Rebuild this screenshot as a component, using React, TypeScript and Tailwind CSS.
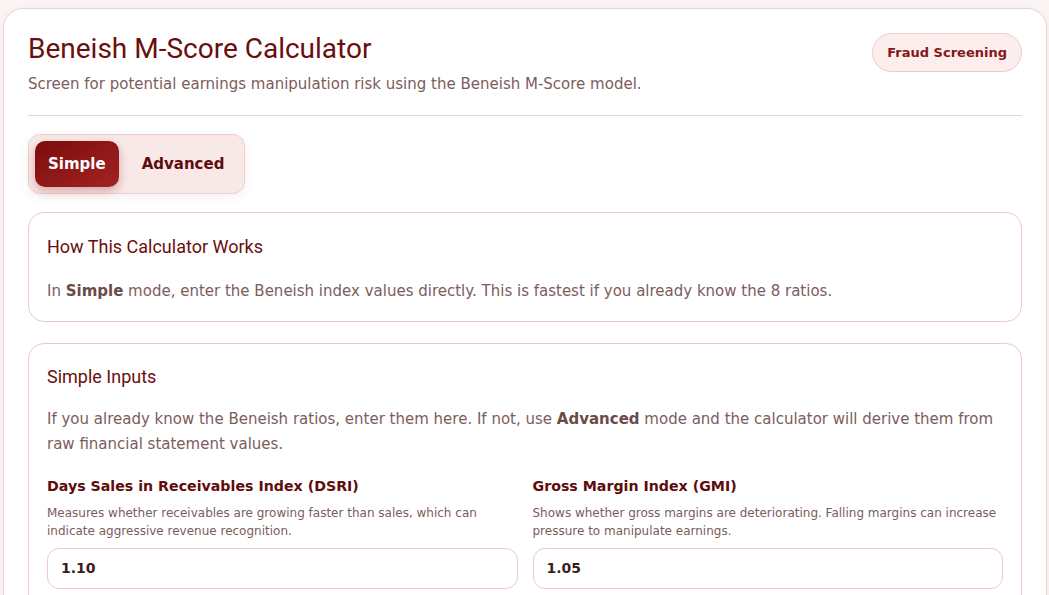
import React from "react";

const body = { fontFamily: '"DejaVu Sans", Verdana, sans-serif' };

function Field({ label, desc, value }: { label: string; desc: string; value: string }) {
  return (
    <div className="flex flex-col">
      <div className="text-[14.2px] font-bold text-[#5e0c0c] leading-[19px]">{label}</div>
      <div className="mt-[8px] text-[12px] leading-[18px] text-[#7a5c5c]">{desc}</div>
      <div className="mt-[8px] h-[41px] rounded-[12px] border border-[#ecc9c9] bg-white flex items-center px-[13px] text-[14px] font-bold text-[#3b1d1d]">
        {value}
      </div>
    </div>
  );
}

export default function App() {
  return (
    <div className="min-h-screen bg-[#fbf4f4] pl-[3px] pr-[2px] pt-[8px]" style={body}>
      <div className="rounded-[20px] border border-[#ecd3d3] bg-white px-[24px] pt-[23px] pb-[24px] shadow-[0_2px_8px_rgba(120,40,40,0.05)]">
        <div className="flex items-start justify-between">
          <div>
            <h1 className="text-[28px] leading-[34px] text-[#6a0e0e] font-normal" style={{ fontFamily: "Roboto, sans-serif" }}>
              Beneish M-Score Calculator
            </h1>
            <p className="mt-[8px] text-[15px] leading-[20px] text-[#7d5c5c]">
              Screen for potential earnings manipulation risk using the Beneish M-Score model.
            </p>
          </div>
          <div className="mt-[1px] h-[39px] rounded-full border border-[#efcaca] bg-[#fdeeee] px-[14px] flex items-center text-[13px] font-bold text-[#861717]">
            Fraud Screening
          </div>
        </div>

        <div className="mt-[21px] h-px bg-[#e9d2d2]" />

        <div className="mt-[18px] inline-flex items-center rounded-[12px] border border-[#ecd0d0] bg-[#f8e8e8] pl-[6px] pr-[3px] py-[6px] gap-[6px] shadow-[0_4px_12px_rgba(150,40,40,0.06)]">
          <div className="h-[46px] rounded-[10px] bg-gradient-to-br from-[#7c0c0c] to-[#a32222] px-[13px] flex items-center text-[15px] font-bold text-white shadow-[0_4px_10px_rgba(140,20,20,0.3)]">
            Simple
          </div>
          <div className="h-[46px] px-[17px] flex items-center text-[15px] font-bold text-[#5e0c0c]">Advanced</div>
        </div>

        <div className="mt-[18px] rounded-[16px] border border-[#ecc9c9] bg-white px-[18px] pt-[22px] pb-[17px]">
          <h2 className="text-[18px] leading-[24px] text-[#6a0e0e]" style={{ fontFamily: "Roboto, sans-serif" }}>
            How This Calculator Works
          </h2>
          <p className="mt-[20px] text-[15px] leading-[25px] text-[#7d5c5c]">
            In <b className="text-[#6b4a4a]">Simple</b> mode, enter the Beneish index values directly. This is fastest if you already know the 8 ratios.
          </p>
        </div>

        <div className="mt-[21px] rounded-[16px] border border-[#ecc9c9] bg-white px-[18px] pt-[21px] pb-[20px]">
          <h2 className="text-[18px] leading-[24px] text-[#6a0e0e]" style={{ fontFamily: "Roboto, sans-serif" }}>
            Simple Inputs
          </h2>
          <p className="mt-[18px] text-[15px] leading-[25px] text-[#7d5c5c]">
            If you already know the Beneish ratios, enter them here. If not, use <b className="text-[#6b4a4a]">Advanced</b> mode and the calculator will derive them from raw financial statement values.
          </p>
          <div className="mt-[20px] grid grid-cols-2 gap-[15px]">
            <Field
              label="Days Sales in Receivables Index (DSRI)"
              desc="Measures whether receivables are growing faster than sales, which can indicate aggressive revenue recognition."
              value="1.10"
            />
            <Field
              label="Gross Margin Index (GMI)"
              desc="Shows whether gross margins are deteriorating. Falling margins can increase pressure to manipulate earnings."
              value="1.05"
            />
          </div>
        </div>
      </div>
    </div>
  );
}
